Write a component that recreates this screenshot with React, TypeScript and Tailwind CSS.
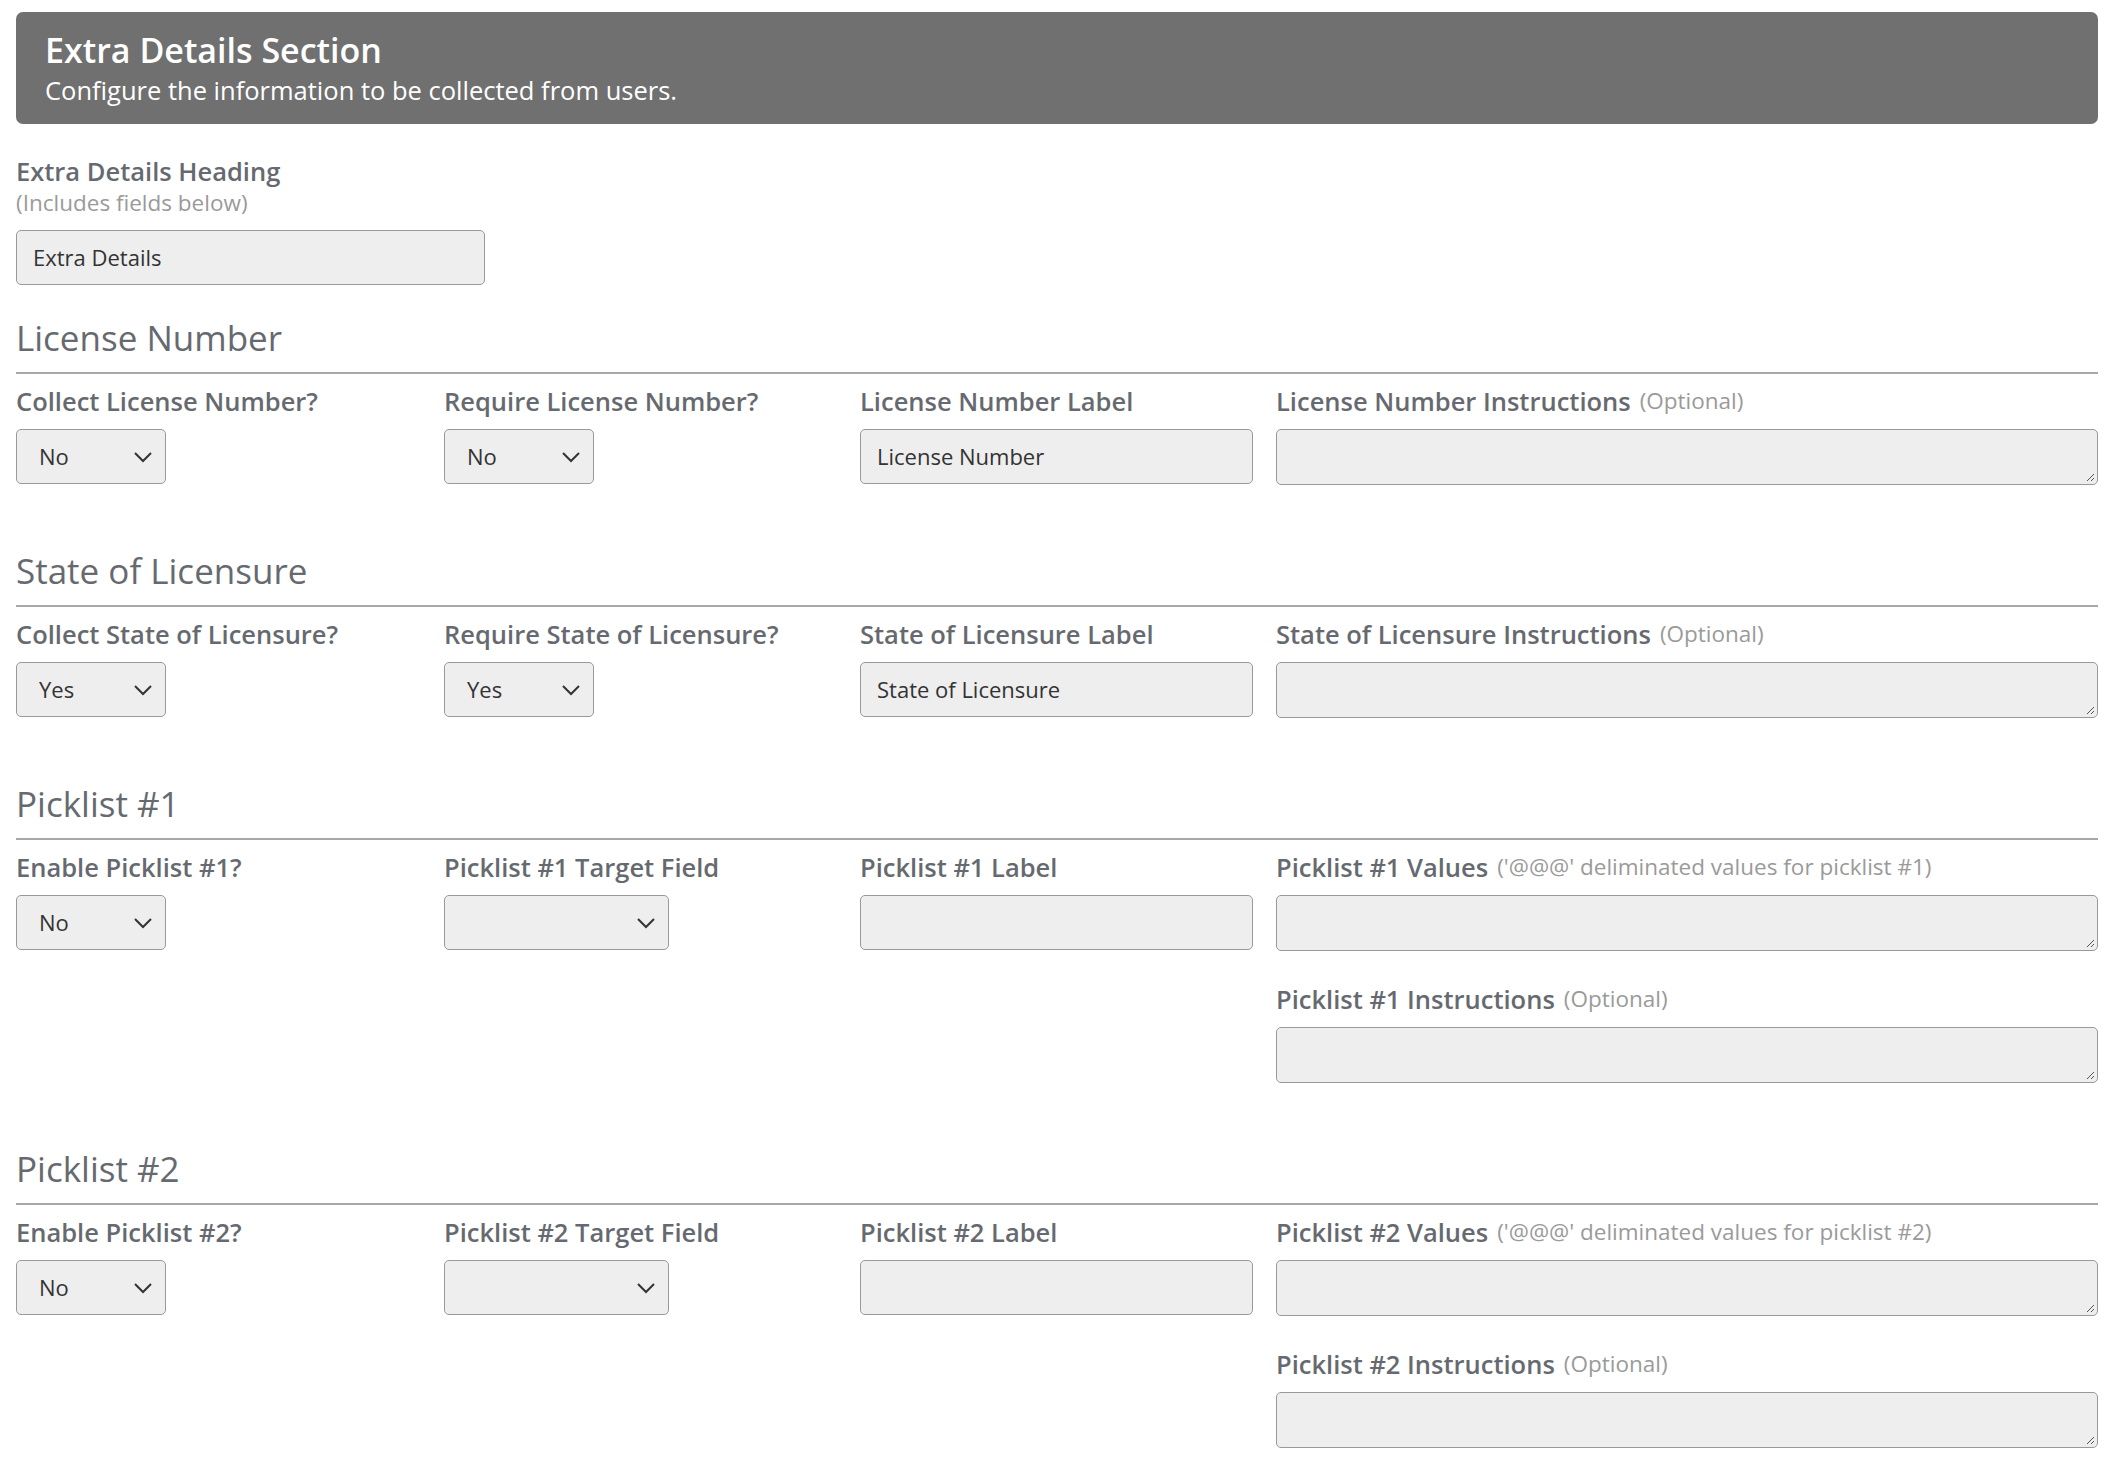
import React from "react";

const F = { fontFamily: '"Open Sans", "Noto Sans", sans-serif' };

function Chevron() {
  return (
    <svg width="20" height="12" viewBox="0 0 20 12" className="shrink-0">
      <path d="M2 2l8 8 8-8" fill="none" stroke="#333" strokeWidth="2" />
    </svg>
  );
}

function Select({ value, w }: { value: string; w: string }) {
  return (
    <div className={`${w} h-[55px] flex items-center justify-between pl-[22px] pr-[12px] bg-[#eeeeee] border border-[#999] rounded-[5px] text-[22px] text-[#333]`}>
      <span>{value}</span>
      <Chevron />
    </div>
  );
}

function Input({ value, w = "w-full" }: { value?: string; w?: string }) {
  return (
    <div className={`${w} h-[55px] flex items-center px-[16px] bg-[#eeeeee] border border-[#999] rounded-[5px] text-[22px] text-[#333]`}>
      {value}
    </div>
  );
}

function Textarea() {
  return (
    <div className="relative w-full h-[56px] bg-[#eeeeee] border border-[#999] rounded-[5px]">
      <svg width="10" height="10" viewBox="0 0 10 10" className="absolute right-[2px] bottom-[2px]">
        <path d="M9 2L2 9M9 6L6 9" stroke="#555" strokeWidth="1" />
      </svg>
    </div>
  );
}

function Label({ text, hint }: { text: string; hint?: string }) {
  return (
    <div className="h-[36px] flex items-center mb-[10px] whitespace-nowrap">
      <span className="text-[25.5px] font-semibold text-[#666a70]">{text}</span>
      {hint && <span className="text-[22.5px] text-[#9a9a9a] ml-[9px]">{hint}</span>}
    </div>
  );
}

function Heading({ text }: { text: string }) {
  return (
    <div>
      <div className="text-[35px] leading-[46px] text-[#666a70]">{text}</div>
      <div className="mt-[11px] border-t-2 border-[#a8a8a8]" />
    </div>
  );
}

function BasicSection(p: { title: string; c1: string; v1: string; c2: string; v2: string; c3: string; v3: string; c4: string }) {
  return (
    <div className="mb-[63px]">
      <Heading text={p.title} />
      <div className="grid grid-cols-[428px_416px_416px_1fr] mt-[9px]">
        <div><Label text={p.c1} /><Select value={p.v1} w="w-[150px]" /></div>
        <div><Label text={p.c2} /><Select value={p.v2} w="w-[150px]" /></div>
        <div><Label text={p.c3} /><Input value={p.v3} w="w-[393px]" /></div>
        <div><Label text={p.c4} hint="(Optional)" /><Textarea /></div>
      </div>
    </div>
  );
}

function PicklistSection({ n }: { n: number }) {
  return (
    <div className="mb-[63px]">
      <Heading text={`Picklist #${n}`} />
      <div className="grid grid-cols-[428px_416px_416px_1fr] mt-[9px]">
        <div><Label text={`Enable Picklist #${n}?`} /><Select value="No" w="w-[150px]" /></div>
        <div><Label text={`Picklist #${n} Target Field`} /><Select value="" w="w-[225px]" /></div>
        <div><Label text={`Picklist #${n} Label`} /><Input w="w-[393px]" /></div>
        <div>
          <Label text={`Picklist #${n} Values`} hint={`('@@@' deliminated values for picklist #${n})`} />
          <Textarea />
          <div className="mt-[30px]">
            <Label text={`Picklist #${n} Instructions`} hint="(Optional)" />
            <Textarea />
          </div>
        </div>
      </div>
    </div>
  );
}

export default function App() {
  return (
    <div style={F} className="bg-white min-h-[1457px] px-[16px] pt-[12px] w-[2114px]">
      <div className="bg-[#707070] rounded-[7px] px-[29px] pt-[15px] pb-[17px] text-white">
        <div className="text-[34px] font-semibold leading-[46px]">Extra Details Section</div>
        <div className="text-[25.5px] leading-[34px]">Configure the information to be collected from users.</div>
      </div>
      <div className="mt-[30px]">
        <div className="text-[25.5px] font-semibold text-[#666a70] leading-[34px]">Extra Details Heading</div>
        <div className="text-[22.5px] text-[#9a9a9a] leading-[30px]">(Includes fields below)</div>
        <div className="mt-[12px]"><Input value="Extra Details" w="w-[469px]" /></div>
      </div>
      <div className="mt-[30px]">
        <BasicSection title="License Number" c1="Collect License Number?" v1="No" c2="Require License Number?" v2="No" c3="License Number Label" v3="License Number" c4="License Number Instructions" />
        <BasicSection title="State of Licensure" c1="Collect State of Licensure?" v1="Yes" c2="Require State of Licensure?" v2="Yes" c3="State of Licensure Label" v3="State of Licensure" c4="State of Licensure Instructions" />
        <PicklistSection n={1} />
        <PicklistSection n={2} />
      </div>
    </div>
  );
}
